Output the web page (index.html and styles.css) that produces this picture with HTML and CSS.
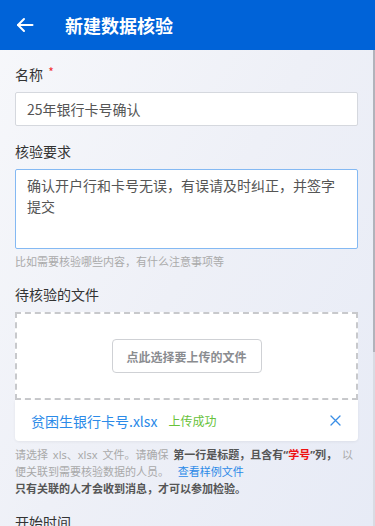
FILE: index.html
```html
<!DOCTYPE html>
<html lang="zh-CN">
<head>
<meta charset="utf-8">
<title>新建数据核验</title>
<link rel="stylesheet" href="styles.css">
</head>
<body>
<div class="app">
  <header class="topbar">
    <span class="back">
      <svg width="18" height="18" viewBox="0 0 18 18" fill="none" stroke="#fff" stroke-width="2" stroke-linecap="round" stroke-linejoin="round"><path d="M16.5 9H2"/><path d="M8 3L2 9l6 6"/></svg>
    </span>
    <h1 class="title">新建数据核验</h1>
  </header>
  <main class="content">
    <div class="field">
      <div class="label">名称 <span class="req">*</span></div>
      <input class="input" type="text" value="25年银行卡号确认">
    </div>
    <div class="field">
      <div class="label">核验要求</div>
      <textarea class="textarea">确认开户行和卡号无误，有误请及时纠正，并签字提交</textarea>
      <div class="hint">比如需要核验哪些内容，有什么注意事项等</div>
    </div>
    <div class="field">
      <div class="label">待核验的文件</div>
      <div class="dropzone">
        <button class="pick" type="button">点此选择要上传的文件</button>
      </div>
      <div class="file-row">
        <span class="file-name">贫困生银行卡号.xlsx</span>
        <span class="file-ok">上传成功</span>
        <span class="file-del">
          <svg width="11" height="11" viewBox="0 0 11 11" fill="none" stroke="#3a8ee6" stroke-width="1.3" stroke-linecap="round"><path d="M1 1l9 9M10 1L1 10"/></svg>
        </span>
      </div>
      <p class="help">请选择 xls、xlsx 文件。请确保 <b>第一行是标题，且含有“<em>学号</em>”列，</b> 以便关联到需要核验数据的人员。 <a class="link">查看样例文件</a><br><b>只有关联的人才会收到消息，才可以参加检验。</b></p>
    </div>
    <div class="field">
      <div class="label">开始时间</div>
      <input class="input" type="text" value="">
    </div>
    <div class="field">
      <div class="label">结束时间</div>
      <input class="input" type="text" value="">
    </div>
    <button class="submit" type="button">提交</button>
  </main>
  <div class="scrollbar"><div class="thumb"></div></div>
</div>
</body>
</html>
```

FILE: styles.css
```css
* { box-sizing: border-box; }
html, body { margin: 0; padding: 0; height: 100%; }
body {
  font-family: "Noto Sans", "Noto Sans CJK SC", sans-serif;
  color: #333;
  overflow: hidden;
}
.app {
  position: relative;
  height: 526px;
  display: flex;
  flex-direction: column;
  background: linear-gradient(120deg, #f7f8fb 0%, #eef0f7 50%, #e7ebf6 100%);
}
.topbar {
  height: 50px;
  flex: none;
  background: #0063d8;
  display: flex;
  align-items: center;
  padding-left: 16px;
}
.back { display: flex; width: 18px; height: 18px; }
.title {
  margin: 0 0 0 31px;
  color: #fff;
  font-size: 18px;
  font-weight: 700;
  line-height: 24px;
  font-family: "Noto Sans CJK SC", sans-serif;
}
.content {
  flex: 1;
  overflow-y: auto;
  padding: 14px 17px 60px 15px;
  scrollbar-width: none;
}
.content::-webkit-scrollbar { width: 0; height: 0; }
.scrollbar {
  position: absolute;
  top: 50px;
  right: 0;
  bottom: 0;
  width: 2px;
  background: #d9dbe3;
}
.thumb { height: 302px; background: #b1b3bb; }
.field { margin-bottom: 15px; }
.label {
  font-size: 14px;
  line-height: 20px;
  margin-bottom: 8px;
  color: #333;
  font-family: "Noto Sans CJK SC", sans-serif;
}
.req { color: #f23030; font-size: 12px; vertical-align: top; line-height: 16px; margin-left: 2px; }
.input {
  display: block;
  width: 100%;
  height: 34px;
  border: 1px solid #d5d8de;
  border-radius: 2px;
  background: #fff;
  padding: 0 11px;
  font-family: "Noto Sans CJK SC", sans-serif;
  font-size: 14px;
  color: #555;
  outline: none;
}
.textarea {
  display: block;
  width: 100%;
  height: 80px;
  border: 1px solid #84b9f3;
  border-radius: 2px;
  background: #fff;
  padding: 5px 11px;
  font-family: "Noto Sans CJK SC", sans-serif;
  font-size: 14px;
  line-height: 21px;
  color: #555;
  outline: none;
  resize: none;
}
.hint {
  margin-top: 4px;
  font-size: 11px;
  line-height: 16px;
  color: #aaa;
  font-family: "Noto Sans CJK SC", sans-serif;
}
.dropzone {
  height: 88px;
  border: 2px dashed #c8c9cc;
  background: #fff;
  display: flex;
  align-items: center;
  justify-content: center;
}
.pick {
  width: 150px;
  height: 34px;
  background: #fff;
  border: 1px solid #cfd1d5;
  border-radius: 4px;
  font-family: "Noto Sans CJK SC", sans-serif;
  font-size: 12px;
  font-weight: 700;
  color: #8a8c90;
  padding: 0;
}
.file-row {
  height: 41px;
  background: #fff;
  border-radius: 0 0 4px 4px;
  box-shadow: 0 1px 3px rgba(0,0,0,0.06);
  display: flex;
  align-items: center;
  padding: 0 17px 0 16px;
  font-family: "Noto Sans CJK SC", sans-serif;
}
.file-name { font-size: 14px; color: #2b8ae8; }
.file-ok { font-size: 12px; color: #67c23a; margin-left: 11px; }
.file-del { margin-left: auto; display: flex; }
.help {
  margin: 5px 0 0;
  font-size: 11px;
  line-height: 17px;
  color: #a9a9a9;
  word-spacing: 2px;
  font-family: "Noto Sans", "Noto Sans CJK SC", sans-serif;
}
.help b { color: #555; font-weight: 700; word-spacing: 0; }
.help em { font-style: normal; color: #ee1111; }
.link { color: #2b8ae8; margin-left: 4px; }
.submit {
  display: block;
  width: 100%;
  height: 44px;
  margin-top: 30px;
  border: none;
  border-radius: 4px;
  background: #0063d8;
  color: #fff;
  font-size: 16px;
  font-family: "Noto Sans CJK SC", sans-serif;
}
```
